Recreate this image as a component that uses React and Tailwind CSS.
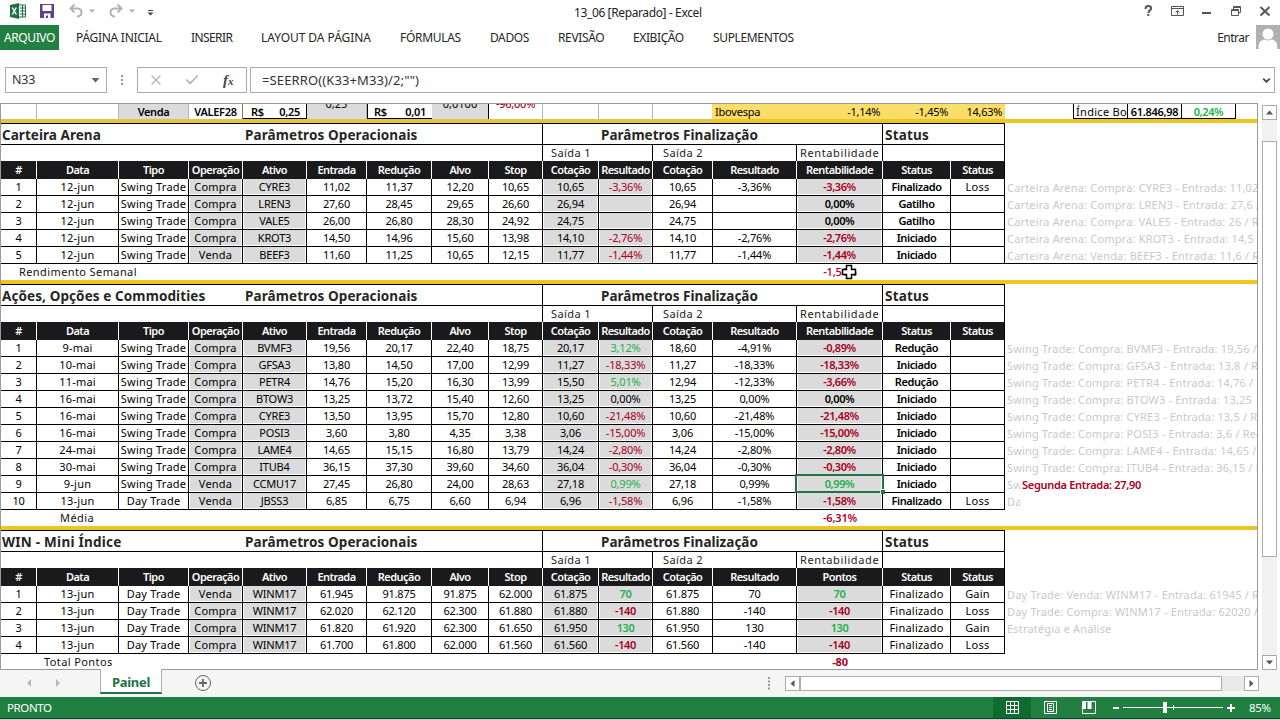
import { ChevronDown, X, Check } from 'lucide-react';

const COLS = 'grid grid-cols-[36px_82px_70px_54px_64px_60px_65px_57px_54px_56px_54px_60px_84px_86px_68px_54px_1fr]';

const tabs = [
    { name: 'PÁGINA INICIAL', box: 'w-[115px]', text: 'tracking-[-0.28px]' },
    { name: 'INSERIR', box: 'w-[70px]', text: 'tracking-[-0.6px]' },
    { name: 'LAYOUT DA PÁGINA', box: 'w-[139px]', text: 'tracking-[-0.05px]' },
    { name: 'FÓRMULAS', box: 'w-[90px]', text: 'tracking-[-0.3px]' },
    { name: 'DADOS', box: 'w-[68px]', text: 'tracking-[-0.4px]' },
    { name: 'REVISÃO', box: 'w-[75px]', text: 'tracking-[-0.35px]' },
    { name: 'EXIBIÇÃO', box: 'w-[80px]', text: 'tracking-[-0.4px]' },
    { name: 'SUPLEMENTOS', box: 'w-[90px]', text: 'tracking-[-0.35px]' },
];

const headers = ['#', 'Data', 'Tipo', 'Operação', 'Ativo', 'Entrada', 'Redução', 'Alvo', 'Stop', 'Cotação', 'Resultado', 'Cotação', 'Resultado', 'Rentabilidade', 'Status', 'Status'];

const carteira = [
    ['1', '12-jun', 'Swing Trade', 'Compra', 'CYRE3', '11,02', '11,37', '12,20', '10,65', '10,65', '-3,36%', '10,65', '-3,36%', '-3,36%', 'Finalizado', 'Loss', 'Carteira Arena: Compra: CYRE3 - Entrada: 11,02'],
    ['2', '12-jun', 'Swing Trade', 'Compra', 'LREN3', '27,60', '28,45', '29,65', '26,60', '26,94', '', '26,94', '', '0,00%', 'Gatilho', '', 'Carteira Arena: Compra: LREN3 - Entrada: 27,6 /'],
    ['3', '12-jun', 'Swing Trade', 'Compra', 'VALE5', '26,00', '26,80', '28,30', '24,92', '24,75', '', '24,75', '', '0,00%', 'Gatilho', '', 'Carteira Arena: Compra: VALE5 - Entrada: 26 / R'],
    ['4', '12-jun', 'Swing Trade', 'Compra', 'KROT3', '14,50', '14,96', '15,60', '13,98', '14,10', '-2,76%', '14,10', '-2,76%', '-2,76%', 'Iniciado', '', 'Carteira Arena: Compra: KROT3 - Entrada: 14,5 /'],
    ['5', '12-jun', 'Swing Trade', 'Venda', 'BEEF3', '11,60', '11,25', '10,65', '12,15', '11,77', '-1,44%', '11,77', '-1,44%', '-1,44%', 'Iniciado', '', 'Carteira Arena: Venda: BEEF3 - Entrada: 11,6 / R'],
];

const acoes = [
    ['1', '9-mai', 'Swing Trade', 'Compra', 'BVMF3', '19,56', '20,17', '22,40', '18,75', '20,17', '3,12%', '18,60', '-4,91%', '-0,89%', 'Redução', '', 'Swing Trade: Compra: BVMF3 - Entrada: 19,56 /'],
    ['2', '10-mai', 'Swing Trade', 'Compra', 'GFSA3', '13,80', '14,50', '17,00', '12,99', '11,27', '-18,33%', '11,27', '-18,33%', '-18,33%', 'Iniciado', '', 'Swing Trade: Compra: GFSA3 - Entrada: 13,8 / R'],
    ['3', '11-mai', 'Swing Trade', 'Compra', 'PETR4', '14,76', '15,20', '16,30', '13,99', '15,50', '5,01%', '12,94', '-12,33%', '-3,66%', 'Redução', '', 'Swing Trade: Compra: PETR4 - Entrada: 14,76 / R'],
    ['4', '16-mai', 'Swing Trade', 'Compra', 'BTOW3', '13,25', '13,72', '15,40', '12,60', '13,25', '0,00%', '13,25', '0,00%', '0,00%', 'Iniciado', '', 'Swing Trade: Compra: BTOW3 - Entrada: 13,25'],
    ['5', '16-mai', 'Swing Trade', 'Compra', 'CYRE3', '13,50', '13,95', '15,70', '12,80', '10,60', '-21,48%', '10,60', '-21,48%', '-21,48%', 'Iniciado', '', 'Swing Trade: Compra: CYRE3 - Entrada: 13,5 / Re'],
    ['6', '16-mai', 'Swing Trade', 'Compra', 'POSI3', '3,60', '3,80', '4,35', '3,38', '3,06', '-15,00%', '3,06', '-15,00%', '-15,00%', 'Iniciado', '', 'Swing Trade: Compra: POSI3 - Entrada: 3,6 / Red'],
    ['7', '24-mai', 'Swing Trade', 'Compra', 'LAME4', '14,65', '15,15', '16,80', '13,79', '14,24', '-2,80%', '14,24', '-2,80%', '-2,80%', 'Iniciado', '', 'Swing Trade: Compra: LAME4 - Entrada: 14,65 /'],
    ['8', '30-mai', 'Swing Trade', 'Compra', 'ITUB4', '36,15', '37,30', '39,60', '34,60', '36,04', '-0,30%', '36,04', '-0,30%', '-0,30%', 'Iniciado', '', 'Swing Trade: Compra: ITUB4 - Entrada: 36,15 / R'],
    ['9', '9-jun', 'Swing Trade', 'Venda', 'CCMU17', '27,45', '26,80', '24,00', '28,63', '27,18', '0,99%', '27,18', '0,99%', '0,99%', 'Iniciado', '', 'Sw'],
    ['10', '13-jun', 'Day Trade', 'Venda', 'JBSS3', '6,85', '6,75', '6,60', '6,94', '6,96', '-1,58%', '6,96', '-1,58%', '-1,58%', 'Finalizado', 'Loss', 'Da'],
];

const win = [
    ['1', '13-jun', 'Day Trade', 'Venda', 'WINM17', '61.945', '91.875', '91.875', '62.000', '61.875', '70', '61.875', '70', '70', 'Finalizado', 'Gain', 'Day Trade: Venda: WINM17 - Entrada: 61945 / R'],
    ['2', '13-jun', 'Day Trade', 'Compra', 'WINM17', '62.020', '62.120', '62.300', '61.880', '61.880', '-140', '61.880', '-140', '-140', 'Finalizado', 'Loss', 'Day Trade: Compra: WINM17 - Entrada: 62020 /'],
    ['3', '13-jun', 'Day Trade', 'Compra', 'WINM17', '61.820', '61.920', '62.300', '61.650', '61.950', '130', '61.950', '130', '130', 'Finalizado', 'Gain', 'Estratégia e Análise'],
    ['4', '13-jun', 'Day Trade', 'Compra', 'WINM17', '61.700', '61.800', '62.000', '61.560', '61.560', '-140', '61.560', '-140', '-140', 'Finalizado', 'Loss', ''],
];

const shaded = [3, 4, 9, 10, 13];

const valueColor = (value) => {
    if (value.startsWith('-')) return 'text-[#a8001c]';
    if (value === '' || value === '0,00%') return 'text-black';
    return 'text-[#22b14c]';
};

const Cell = ({ value, col, points, selected }) => {
    const isText = [1, 2, 3, 14, 15].includes(col);
    const colored = col === 10 || col === 13;
    const bold = col === 13 || (col === 14 && !points) || (col === 10 && points);
    return (
        <div className="relative h-[17px] border-r border-b border-black">
            <div className={`h-[15px] leading-4 text-center whitespace-nowrap flex justify-center ${shaded.includes(col) ? 'bg-[#dbdbdb] mx-px' : ''} ${bold ? 'font-semibold tracking-[-0.4px]' : isText ? 'tracking-[0.22px]' : 'tracking-[-0.2px]'} ${colored ? valueColor(value) : 'text-black'}`}>
                {value}
            </div>
            {selected && (
                <div className="absolute -top-[2px] -left-[2px] w-[89px] h-[19px] border-2 border-[#217346] z-10">
                    <span className="absolute -right-[3px] -bottom-[3px] w-[5px] h-[5px] bg-[#217346] border-t border-l border-white"></span>
                </div>
            )}
        </div>
    );
};

const Section = ({ title, titleClass, rows, points, total, totalLabel, labelClass, totalClass, selectedRow, children, footLine }) => (
    <div className="relative">
        {/* Título do bloco */}
        <div className="w-[1004px] h-[22px] border-y border-r border-black flex text-[13.5px] leading-[22px] font-bold text-[#262626] whitespace-nowrap">
            <div className="w-[542px] border-r border-black flex">
                <span className={`w-[244px] pl-px ${titleClass}`}>{title}</span>
                <span className="tracking-[0.1px]">Parâmetros Operacionais</span>
            </div>
            <div className="w-[340px] border-r border-black pl-[58px] tracking-[0.02px]">Parâmetros Finalização</div>
            <div className="pl-[2px] tracking-[0.2px]">Status</div>
        </div>
        <div className="w-[1004px] h-4 border-r border-black flex text-[11px] leading-4 tracking-[0.4px] text-[#222] whitespace-nowrap">
            <div className="w-[542px] border-r border-black"></div>
            <div className="w-[110px] border-r border-black pl-2">Saída 1</div>
            <div className="w-[144px] border-r border-black pl-[10px]">Saída 2</div>
            <div className="w-[86px] border-r border-black pl-[3px] tracking-[0.62px]">Rentabilidade</div>
        </div>
        {/* Cabeçalho preto */}
        <div className={`${COLS} h-[18px] text-[11px] leading-[18px] font-semibold text-white tracking-[-0.55px]`}>
            {headers.map((name, i) => (
                <div key={i} className={`bg-[#1a1a1c] border-r flex justify-center whitespace-nowrap ${i === 15 ? 'border-black' : 'border-white'}`}>
                    {points && i === 13 ? 'Pontos' : name}
                </div>
            ))}
        </div>
        {rows.map((row, r) => (
            <div key={r} className={`${COLS} text-[11px]`}>
                {row.slice(0, 16).map((value, i) => (
                    <Cell key={i} value={value} col={i} points={points} selected={selectedRow === r && i === 13} />
                ))}
                <div className={`pl-[2px] pt-px leading-4 h-[17px] overflow-hidden whitespace-nowrap text-[#c9c9c9] tracking-[0.18px] ${footLine && r === rows.length - 1 ? 'border-b border-black' : ''}`}>
                    {row[16]}
                </div>
            </div>
        ))}
        <div className="h-4 flex text-[11px] leading-4 whitespace-nowrap text-[#111]">
            <div className={`w-[796px] tracking-[0.4px] ${labelClass}`}>{totalLabel}</div>
            <div className={`w-[86px] text-center text-[#a8001c] tracking-[-0.2px] ${totalClass}`}>{total}</div>
        </div>
        {children}
    </div>
);

const TopStrip = () => (
    <div className="h-[15px] flex text-[11px] leading-[15px] overflow-hidden whitespace-nowrap text-black">
        <div className="w-[36px] border-r border-[#b5b5b5]"></div>
        <div className="w-[82px] border-r border-[#b5b5b5]"></div>
        <div className="w-[70px] bg-[#dbdbdb] border-r border-[#b5b5b5] text-center font-semibold tracking-[-0.4px]">Venda</div>
        <div className="w-[54px] border-r border-[#777] text-center font-semibold tracking-[-0.3px]">VALEF28</div>
        <div className="w-[64px] flex justify-between pl-2 pr-[6px] font-semibold tracking-[-0.3px] border-b border-r border-black">
            <span>R$</span><span>0,25</span>
        </div>
        <div className="w-[60px] bg-[#dbdbdb] border-r border-[#b5b5b5] text-center leading-[0px]">0,25</div>
        <div className="w-[65px] flex justify-between pl-[6px] pr-[6px] font-semibold tracking-[-0.3px] border-b border-l border-black">
            <span>R$</span><span>0,01</span>
        </div>
        <div className="w-[57px] bg-[#dbdbdb] border-r border-black text-center leading-[0px]">0,0100</div>
        <div className="w-[54px] border-r border-[#b5b5b5] text-center leading-[0px] font-medium text-[#a8001c] tracking-[-0.3px]">-96,00%</div>
        <div className="w-[56px] border-r border-[#b5b5b5]"></div>
        <div className="w-[54px] border-r border-[#b5b5b5]"></div>
        <div className="w-[59px]"></div>
        <div className="w-[293px] bg-[#fade69] flex tracking-[-0.3px]">
            <span className="w-[84px] pl-[3px] tracking-[-0.2px]">Ibovespa</span>
            <span className="w-[86px] pr-[2px] text-right">-1,14%</span>
            <span className="w-[68px] pr-[2px] text-right">-1,45%</span>
            <span className="w-[54px] pr-[2px] text-right">14,63%</span>
        </div>
        <div className="w-[68px]"></div>
        <div className="w-[55px] border-x border-b border-black pl-[2px] overflow-hidden tracking-[0.3px]">Índice Bo</div>
        <div className="w-[54px] border-r border-b border-black text-center font-semibold tracking-[-0.3px]">61.846,98</div>
        <div className="w-[54px] border-r border-b border-black text-center font-semibold tracking-[-0.4px] text-[#22b14c]">0,24%</div>
    </div>
);

const TitleBar = () => (
    <div className="relative h-6 flex items-center justify-between">
        <svg width="160" height="24" viewBox="0 0 160 24" fill="none">
            <path d="M10 5l9-2v16l-9-2z" fill="#1e7145" />
            <path d="M12.300 7.500l4 7M16.300 7.500l-4 7" stroke="#fff" strokeWidth="1.500" />
            <path d="M19 5h6.500v12H19M20 8h5M20 11h5M20 14h5M22.500 5v12" stroke="#1e7145" />
            <path d="M40 4h14v14H40z" fill="#5c4188" />
            <path d="M42.500 5h9v6h-9zM44 13.500h6.500V18H48v-2.500h-2V18h-2z" fill="#fff" />
            <path d="M74.500 4.500L70.500 8.500l4 4M71 8.500h6.500q4 .5 4 4t-4.500 4" stroke="#b3b3b3" strokeWidth="2" />
            <path d="M89 9.500h6l-3 3zM129 9.500h6l-3 3z" fill="#aaa" />
            <path d="M117.500 4.500l4 4-4 4M121 8.500h-6.500q-4 .5-4 4t4.500 4" stroke="#b3b3b3" strokeWidth="2" />
            <path d="M148 10.500h5" stroke="#444" />
            <path d="M147.500 12.500h6l-3 3z" fill="#444" />
        </svg>
        <span className="absolute left-[574px] top-1 text-xs leading-[18px] tracking-[-0.38px] text-[#222] whitespace-nowrap">13_06 [Reparado] - Excel</span>
        <svg width="140" height="24" viewBox="0 0 140 24" fill="none" stroke="#555">
            <path d="M5.500 9q0-3 2.800-3t2.800 2.400c0 2-2.800 2-2.800 4.600M8.300 14v2" strokeWidth="2" />
            <path d="M31.500 6.500h12v9h-12zM31.500 8.500h12M37.500 14.500v-4M35.500 12.500l2-2 2 2" />
            <path d="M62 13h9" strokeWidth="2" />
            <path d="M91.500 9.500h7v6h-7zM91.500 10.500h7M93.500 9v-2.500h7v6H99M93.500 7.500h7" />
            <path d="M120.500 7l9 8.500M129.500 7l-9 8.500" strokeWidth="2" />
        </svg>
    </div>
);

const Ribbon = () => (
    <div className="h-[43px] flex items-start text-xs whitespace-nowrap text-[#262626]">
        <div className="mt-px w-[59px] h-[25px] leading-[25px] text-center bg-[#217f42] text-white tracking-[-0.4px]">ARQUIVO</div>
        <div className="flex pl-[17px] pt-px leading-[25px]">
            {tabs.map((tab) => (
                <div key={tab.name} className={`${tab.box} ${tab.text}`}>{tab.name}</div>
            ))}
        </div>
        <div className="ml-auto flex items-start">
            <span className="pt-px leading-[25px] tracking-[-0.5px] pr-[7px]">Entrar</span>
            <svg className="mt-px" width="24" height="24" viewBox="0 0 24 24">
                <path d="M0 0h24v24H0z" fill="#b0b0b0" />
                <circle cx="12" cy="9" r="5.500" fill="#fff" />
                <path d="M2.500 24c0-7 2-9 6.500-9.500q3 2 6 0c4.500.5 6.500 2.500 6.500 9.500z" fill="#fff" />
            </svg>
        </div>
    </div>
);

const FormulaBar = () => (
    <div className="h-9 flex items-start pl-[5px] text-[13px] text-[#333]">
        <div className="w-[102px] h-[26px] border border-[#ababab] flex items-center justify-between pl-[6px] pr-[6px]">
            <span className="text-[12.500px] tracking-[-0.2px] pt-px">N33</span>
            <svg width="9" height="5"><path d="M0.500 0h8L4.500 4.500z" fill="#666" /></svg>
        </div>
        <svg width="30" height="26" fill="#999"><path d="M14 8h2v2h-2zM14 12h2v2h-2zM14 16h2v2h-2z" /></svg>
        <div className="w-[110px] h-[26px] border border-[#ababab] flex items-center pl-[10px]">
            <X className="w-4 h-4 text-[#b5b5b5]" strokeWidth={2} />
            <Check className="w-4 h-4 ml-5 text-[#b5b5b5]" strokeWidth={2.5} />
            <span className="ml-[23px] font-['Liberation_Serif',serif] italic font-bold text-[15px] text-[#444]">f<span className="text-[11px]">x</span></span>
        </div>
        <div className="ml-[3px] w-[1025px] h-[26px] border border-[#ababab] flex items-center justify-between pl-[11px] pr-[2px]">
            <span className="tracking-[0.12px] pt-px">=SEERRO((K33+M33)/2;"")</span>
            <ChevronDown className="w-[11px] h-[11px] text-[#444]" strokeWidth={4} />
        </div>
    </div>
);

const Arrow = ({ d }) => (
    <div className="w-[15px] h-[15px] shrink-0 border border-[#ababab] bg-white">
        <svg width="13" height="13"><path d={d} fill="#555" /></svg>
    </div>
);

const App = () => {
    return (
        <div className="w-[1280px] h-[720px] overflow-hidden bg-white flex flex-col font-['Noto_Sans',sans-serif]">
            <TitleBar />
            <Ribbon />
            <FormulaBar />

            {/* Planilha + rolagem vertical */}
            <div className="h-[567px] flex">
                <div className="w-[1258px] h-full border border-[#9a9a9a] overflow-hidden">
                    <TopStrip />
                    <div className="h-1 bg-[#edc71f] flex">
                        <div className="w-[712px] h-[2px] bg-[#d9c35c]"></div>
                    </div>
                    <Section title="Carteira Arena" titleClass="tracking-[0.05px]" rows={carteira} totalLabel="Rendimento Semanal" labelClass="pl-[18px]" total="-1,51%" totalClass="font-medium" footLine>
                        {/* Cursor em cruz */}
                        <svg className="absolute left-[840px] top-[141px]" width="16" height="16" viewBox="0 0 16 16">
                            <path d="M5.500 1.500h5v4h4v5h-4v4h-5v-4h-4v-5h4z" fill="#fff" stroke="#000" strokeWidth="1.500" />
                        </svg>
                    </Section>
                    <div className="h-1 bg-[#edc71f]"></div>
                    <Section title="Ações, Opções e Commodities" titleClass="tracking-[0.1px]" rows={acoes} totalLabel="Média" labelClass="pl-[59px]" total="-6,31%" totalClass="font-semibold" selectedRow={8}>
                        <div className="absolute left-[1019px] top-[193px] w-[236px] h-[32px] bg-white pl-[2px] text-[11px] leading-4 font-semibold tracking-[-0.3px] text-[#a8001c]">Segunda Entrada: 27,90</div>
                    </Section>
                    <div className="h-1 bg-[#edc71f]"></div>
                    <Section title="WIN - Mini Índice" titleClass="tracking-[0.25px]" rows={win} points totalLabel="Total Pontos" labelClass="pl-[43px]" total="-80" totalClass="font-bold" />
                </div>
                <div className="ml-1 mt-[2px] h-[565px] w-[15px] flex flex-col bg-[#f1f1f1]">
                    <Arrow d="M3 8.500h7L6.500 4.500z" />
                    <div className="mt-[21px] h-[416px] bg-white border border-[#ababab]"></div>
                    <div className="mt-auto"><Arrow d="M3 4.500h7L6.500 8.500z" /></div>
                </div>
            </div>

            {/* Abas da planilha */}
            <div className="h-[27px] bg-[#f5f5f5] flex items-start">
                <svg width="100" height="27" fill="#b8b8b8"><path d="M31 9v8l-4-4zM56 9v8l4-4z" /></svg>
                <div className="relative -mt-px w-[62px] h-[25px] bg-white border-x border-[#ababab] border-b-2 border-b-[#217346] text-center text-[13px] leading-[27px] font-bold tracking-[-0.3px] text-[#217346]">Painel</div>
                <svg className="ml-8" width="18" height="27" fill="none" stroke="#666">
                    <circle cx="9" cy="13" r="7.500" />
                    <path d="M5 13h8M9 9v8" strokeWidth="1.800" />
                </svg>
                <svg className="ml-[555px]" width="4" height="27" fill="#999"><path d="M1 7h2v2H1zM1 10.500h2v2H1zM1 14h2v2H1zM1 17.500h2v2H1z" /></svg>
                <div className="ml-[14px] mt-[6px] flex w-[474px] bg-[#e9e9e9]">
                    <Arrow d="M8.500 3v7L4.500 6.500z" />
                    <div className="w-[422px] h-[15px] border border-[#ababab] bg-white"></div>
                    <div className="ml-auto"><Arrow d="M4.500 3v7L8.500 6.500z" /></div>
                </div>
            </div>

            {/* Barra de status */}
            <div className="h-[22px] bg-[#217f42] border-b border-[#123f22] flex items-center text-white text-[11.500px]">
                <span className="pl-[7px] tracking-[-0.4px]">PRONTO</span>
                <div className="ml-auto w-[38px] h-full bg-[#0f6b30] flex items-center justify-center">
                    <svg className="ml-px" width="14" height="14" fill="none" stroke="#fff"><path d="M.5.5h12v12H.5zM4.500.5v12M8.500.5v12M.5 4.500h12M.5 8.500h12" /></svg>
                </div>
                <svg className="ml-[13px]" width="14" height="14" fill="none" stroke="#fff"><path d="M.5.5h12v12H.5zM3.500 2.500h6v8h-6zM5 4.500h3M5 6.500h3M5 8.500h3" /></svg>
                <svg className="ml-6" width="15" height="14" fill="none" stroke="#fff">
                    <path d="M.5.5h13v12H.5z" />
                    <path d="M1 1h3v7H1zM5.500 1h4v7h-4z" fill="#fff" stroke="none" />
                </svg>
                <svg className="ml-[15px]" width="124" height="14" fill="none" stroke="#fff">
                    <path d="M1 7h6M115 7h8M119 3v8" strokeWidth="2" />
                    <path d="M11 6.500h100M61.500 4v5" />
                    <path d="M51 1h4v11h-4z" fill="#fff" stroke="none" />
                </svg>
                <span className="w-[44px] pl-[13px] tracking-[-0.3px]">85%</span>
            </div>
            <div className="h-px bg-[#c5cfc9]"></div>
        </div>
    );
};

export default App;
